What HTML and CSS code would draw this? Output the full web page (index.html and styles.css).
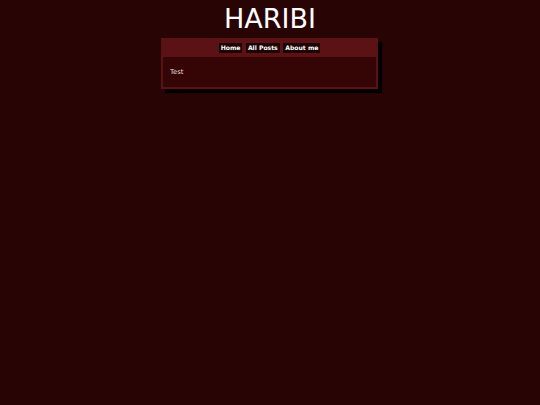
FILE: index.html
```html
<!DOCTYPE html>
<html>
<head>
<meta charset="utf-8">
<link rel="stylesheet" href="styles.css">
</head>
<body>
<h1 class="title">HARIBI</h1>
<div class="box">
  <nav class="nav">
    <a class="btn">Home</a>
    <a class="btn">All Posts</a>
    <a class="btn">About me</a>
  </nav>
  <div class="content">
    <p class="text">Test</p>
  </div>
</div>
</body>
</html>
```
FILE: styles.css
```css
html, body {
  margin: 0;
  padding: 0;
  min-height: 100%;
  background: #280404;
  font-family: "DejaVu Sans", sans-serif;
}
body {
  min-height: 405px;
}
.title {
  margin: 0;
  padding-top: 4px;
  height: 34px;
  text-align: center;
  font-size: 27px;
  font-weight: normal;
  line-height: 30px;
  color: #ffffff;
}
.box {
  width: 213px;
  margin: 0 0 0 161px;
  background: #5a1214;
  padding: 0 2px 2px 2px;
  box-shadow: 4px 4px 1px #000;
}
.nav {
  display: flex;
  justify-content: center;
  gap: 3.5px;
  padding: 5px 0 4px;
}
.btn {
  display: block;
  background: #1e0303;
  color: #fff;
  font-weight: bold;
  font-size: 6.1px;
  line-height: 10px;
  padding: 0 2px;
}
.content {
  background: #350505;
  height: 30px;
  display: flex;
  align-items: center;
}
.text {
  margin: 0 0 0 7px;
  font-size: 6.8px;
  color: #e8d8d8;
}
```
